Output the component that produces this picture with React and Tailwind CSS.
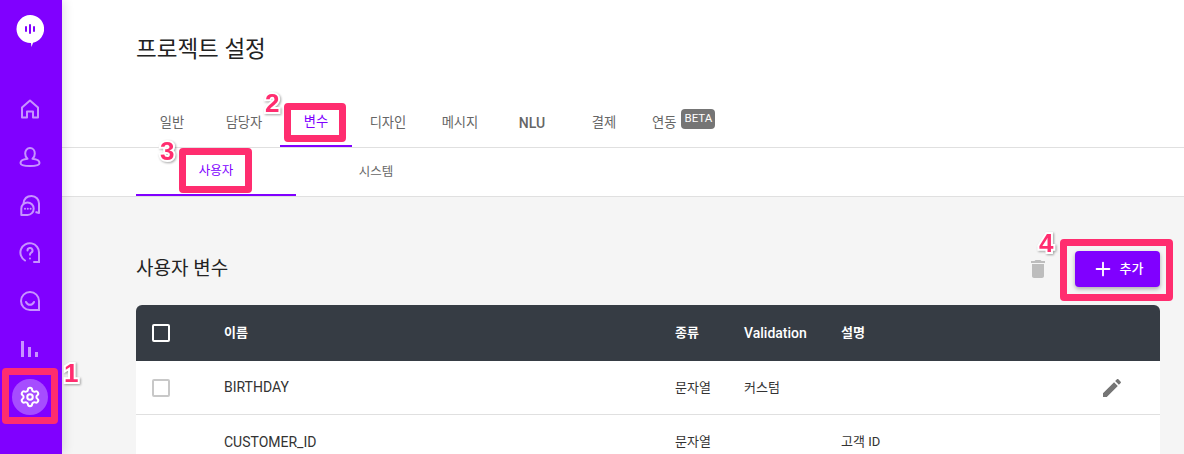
import React from "react";
import { Settings, Plus } from "lucide-react";

const tabs = ["일반", "담당자", "변수", "디자인", "메시지", "NLU", "결제"];

const HomeIcon = () => (
  <svg width="22" height="22" viewBox="0 0 22 22" fill="none" stroke="#c793ff" strokeWidth="2" strokeLinejoin="round">
    <path d="M3 19.500V9.500L11 2.500l8 7v10h-5v-6H8v6z" />
  </svg>
);

const UserIcon = () => (
  <svg width="24" height="24" viewBox="0 0 24 24" fill="none" stroke="#c793ff" strokeWidth="2" strokeLinejoin="round">
    <path d="M12 3c2.900 0 4.800 2.400 4.800 5.400 0 2.500-1 4.300-2.300 5.400 3.800.4 7 1.700 7 4.100 0 2-3 3.100-9.500 3.100s-9.500-1.100-9.500-3.100c0-2.400 3.200-3.700 7-4.100-1.300-1.100-2.300-2.900-2.300-5.400C7.200 5.400 9.100 3 12 3z" />
  </svg>
);

const ChatIcon = () => (
  <svg width="24" height="24" viewBox="0 0 24 24" fill="none" stroke="#c793ff" strokeWidth="2" strokeLinejoin="round">
    <path d="M5.500 10.500C6 6 9 3 13.500 3 18 3 21 6.500 21 10.500V20l-3.500-1" />
    <path d="M9.500 9.500a6.200 6.200 0 1 1 0 12.400H3.300v-6.200a6.200 6.200 0 0 1 6.200-6.200z" fill="#8000ff" />
    <path d="M7 15.700h.01M9.800 15.700h.01M12.600 15.700h.01" strokeLinecap="round" />
  </svg>
);

const QuestionIcon = () => (
  <svg width="24" height="24" viewBox="0 0 24 24" fill="none" stroke="#c793ff" strokeWidth="2" strokeLinecap="round">
    <path d="M7 19.500A9.300 9.300 0 1 1 21 12v9h-5" />
    <path d="M9.500 9.500a2.500 2.500 0 1 1 3.700 2.200c-.8.500-1.200 1-1.200 2" />
    <path d="M12 17.500h.01" />
  </svg>
);

const SmileIcon = () => (
  <svg width="24" height="24" viewBox="0 0 24 24" fill="none" stroke="#c793ff" strokeWidth="2" strokeLinecap="round">
    <path d="M21 21h-9a9 9 0 1 1 9-9z" />
    <path d="M8 13c1 2 2.500 2.800 4 2.800s3-.8 4-2.800" />
  </svg>
);

const BarsIcon = () => (
  <svg width="18" height="16" viewBox="0 0 18 16" fill="#c793ff">
    <rect x="0" y="0" width="3" height="16" />
    <rect x="7" y="6" width="3" height="10" />
    <rect x="14" y="11" width="3" height="5" />
  </svg>
);

const NavItem = ({ children }) => (
  <div className="flex h-[48px] items-center justify-center pr-[2px]">{children}</div>
);

const Sidebar = () => (
  <div className="z-10 flex w-[62px] shrink-0 flex-col bg-[#8000ff] shadow-[2px_0_10px_rgba(0,0,0,0.12)]">
    <div className="flex h-[85px] items-start justify-center pt-[15px] pr-[2px]">
      <svg width="28" height="32" viewBox="0 0 28 32">
        <path d="M14 0a14 14 0 0 1 3 27.700L15.500 32 15 28A14 14 0 0 1 14 0z" fill="#fff" />
        <rect x="9" y="11" width="2" height="6" rx="1" fill="#8000ff" />
        <rect x="13" y="9" width="2" height="10" rx="1" fill="#8000ff" />
        <rect x="17" y="11" width="2" height="6" rx="1" fill="#8000ff" />
      </svg>
    </div>
    <NavItem><HomeIcon /></NavItem>
    <NavItem><UserIcon /></NavItem>
    <NavItem><ChatIcon /></NavItem>
    <NavItem><QuestionIcon /></NavItem>
    <NavItem><SmileIcon /></NavItem>
    <NavItem><BarsIcon /></NavItem>
    <NavItem>
      <div className="flex h-[36px] w-[36px] items-center justify-center rounded-full bg-[#a64dff]">
        <Settings size={22} color="#fff" strokeWidth={2.2} />
      </div>
    </NavItem>
  </div>
);

const Row = ({ name, type, validation, desc, last }) => (
  <div className={`flex h-[54px] items-center bg-white text-[13px] text-[#333] ${last ? "" : "border-b border-[#e0e0e0]"}`}>
    <div className="w-[88px] pl-[16px]">
      {!last && <div className="h-[18px] w-[18px] rounded-[2px] border-2 border-[#c8c8c8]" />}
    </div>
    <div className="w-[451px] text-[14px]">{name}</div>
    <div className="w-[69px]">{type}</div>
    <div className="w-[97px]">{validation}</div>
    <div className="flex-1">{desc}</div>
    {!last && (
      <svg className="mr-[36px]" width="24" height="24" viewBox="0 0 24 24" fill="#757575">
        <path d="M3 17.250V21h3.750L17.810 9.940l-3.750-3.750L3 17.250zM20.710 7.040c.39-.39.39-1.020 0-1.410l-2.340-2.340c-.39-.39-1.020-.39-1.410 0l-1.830 1.830 3.750 3.750 1.830-1.830z" />
      </svg>
    )}
  </div>
);

const Mark = ({ className }) => (
  <div className={`absolute z-20 rounded-[4px] border-[7px] border-[#ff2d6f] ${className}`} />
);

const Num = ({ className, children }) => (
  <div
    className={`absolute z-20 text-[26px] leading-none font-bold text-[#ff2d6f] [-webkit-text-stroke:4px_#fff] [paint-order:stroke_fill] [filter:drop-shadow(1px_1px_1px_rgba(0,0,0,0.35))] ${className}`}
    style={{ fontFamily: '"Liberation Sans", sans-serif' }}
  >
    {children}
  </div>
);

export default function App() {
  return (
    <div
      className="relative flex h-[454px] w-[1184px] overflow-hidden bg-[#f5f5f5]"
      style={{ fontFamily: 'Roboto, "Noto Sans CJK KR", sans-serif' }}
    >
      <Sidebar />

      <div className="flex min-w-0 flex-1 flex-col">
        {/* Title and main tabs */}
        <div className="h-[148px] border-b border-[#e0e0e0] bg-white pl-[74px]">
          <h1 className="pt-[33px] text-[22.5px] leading-[32px] font-normal text-[#222]">프로젝트 설정</h1>
          <div className="mt-[32px] flex">
            {tabs.map((t) => (
              <div
                key={t}
                className={`flex h-[50px] w-[72px] items-center justify-center pt-[2px] ${
                  t === "변수" ? "border-b-2 border-[#8000ff] text-[#8000ff]" : "text-[#666]"
                } ${t === "NLU" ? "text-[14px] font-medium" : "text-[13.3px]"}`}
              >
                {t}
              </div>
            ))}
            <div className="flex h-[50px] items-center pt-[2px] pl-[12px] text-[13.3px] text-[#666]">
              연동
              <span className="mb-[8px] ml-[5px] h-[20px] rounded-[4px] bg-[#757575] px-[3px] text-[11.5px] leading-[18px] text-white">BETA</span>
            </div>
          </div>
        </div>

        {/* Sub tabs */}
        <div className="flex h-[49px] border-b border-[#e0e0e0] bg-white pl-[74px]">
          <div className="flex h-[48px] w-[160px] items-center justify-center border-b-2 border-[#8000ff] text-[12.5px] text-[#8000ff]">
            사용자
          </div>
          <div className="flex h-[48px] w-[160px] items-center justify-center text-[12.5px] text-[#666]">시스템</div>
        </div>

        {/* Content */}
        <div className="pr-[24px] pl-[74px]">
          <div className="flex h-[108px] items-center justify-between pt-[54px] pb-[18px]">
            <h2 className="text-[19px] font-normal text-[#222]">사용자 변수</h2>
            <div className="flex items-center">
              <svg className="mr-[25px]" width="24" height="24" viewBox="0 0 24 24" fill="#bdbdbd">
                <path d="M6 19c0 1.100.9 2 2 2h8c1.100 0 2-.9 2-2V7H6v12zM19 4h-3.500l-1-1h-5l-1 1H5v2h14V4z" />
              </svg>
              <button className="flex h-[36px] w-[85px] items-center justify-center gap-[6px] rounded-[4px] bg-[#8000ff] text-[13px] font-medium text-white shadow-[0_2px_4px_rgba(0,0,0,0.3)]">
                <Plus size={22} strokeWidth={2} />
                추가
              </button>
            </div>
          </div>

          <div className="overflow-hidden rounded-t-[6px]">
            <div className="flex h-[56px] items-center bg-[#363c44] text-[13px] font-bold text-white">
              <div className="w-[88px] pl-[16px]">
                <div className="h-[18px] w-[18px] rounded-[2px] border-2 border-white" />
              </div>
              <div className="w-[451px]">이름</div>
              <div className="w-[69px]">종류</div>
              <div className="w-[97px] text-[14px] font-medium">Validation</div>
              <div className="flex-1">설명</div>
            </div>
            <Row name="BIRTHDAY" type="문자열" validation="커스텀" desc="" />
            <Row name="CUSTOMER_ID" type="문자열" validation="" desc="고객 ID" last />
          </div>
        </div>
      </div>

      {/* Tutorial annotations */}
      <Mark className="top-[368px] left-[2px] h-[56px] w-[56px]" />
      <Mark className="top-[103px] left-[284px] h-[39px] w-[62px]" />
      <Mark className="top-[148px] left-[179px] h-[45px] w-[73px]" />
      <Mark className="top-[239px] left-[1060px] h-[62px] w-[113px]" />
      <Num className="top-[360px] left-[64px]">1</Num>
      <Num className="top-[90px] left-[265px]">2</Num>
      <Num className="top-[138px] left-[160px]">3</Num>
      <Num className="top-[230px] left-[1039px]">4</Num>
    </div>
  );
}
